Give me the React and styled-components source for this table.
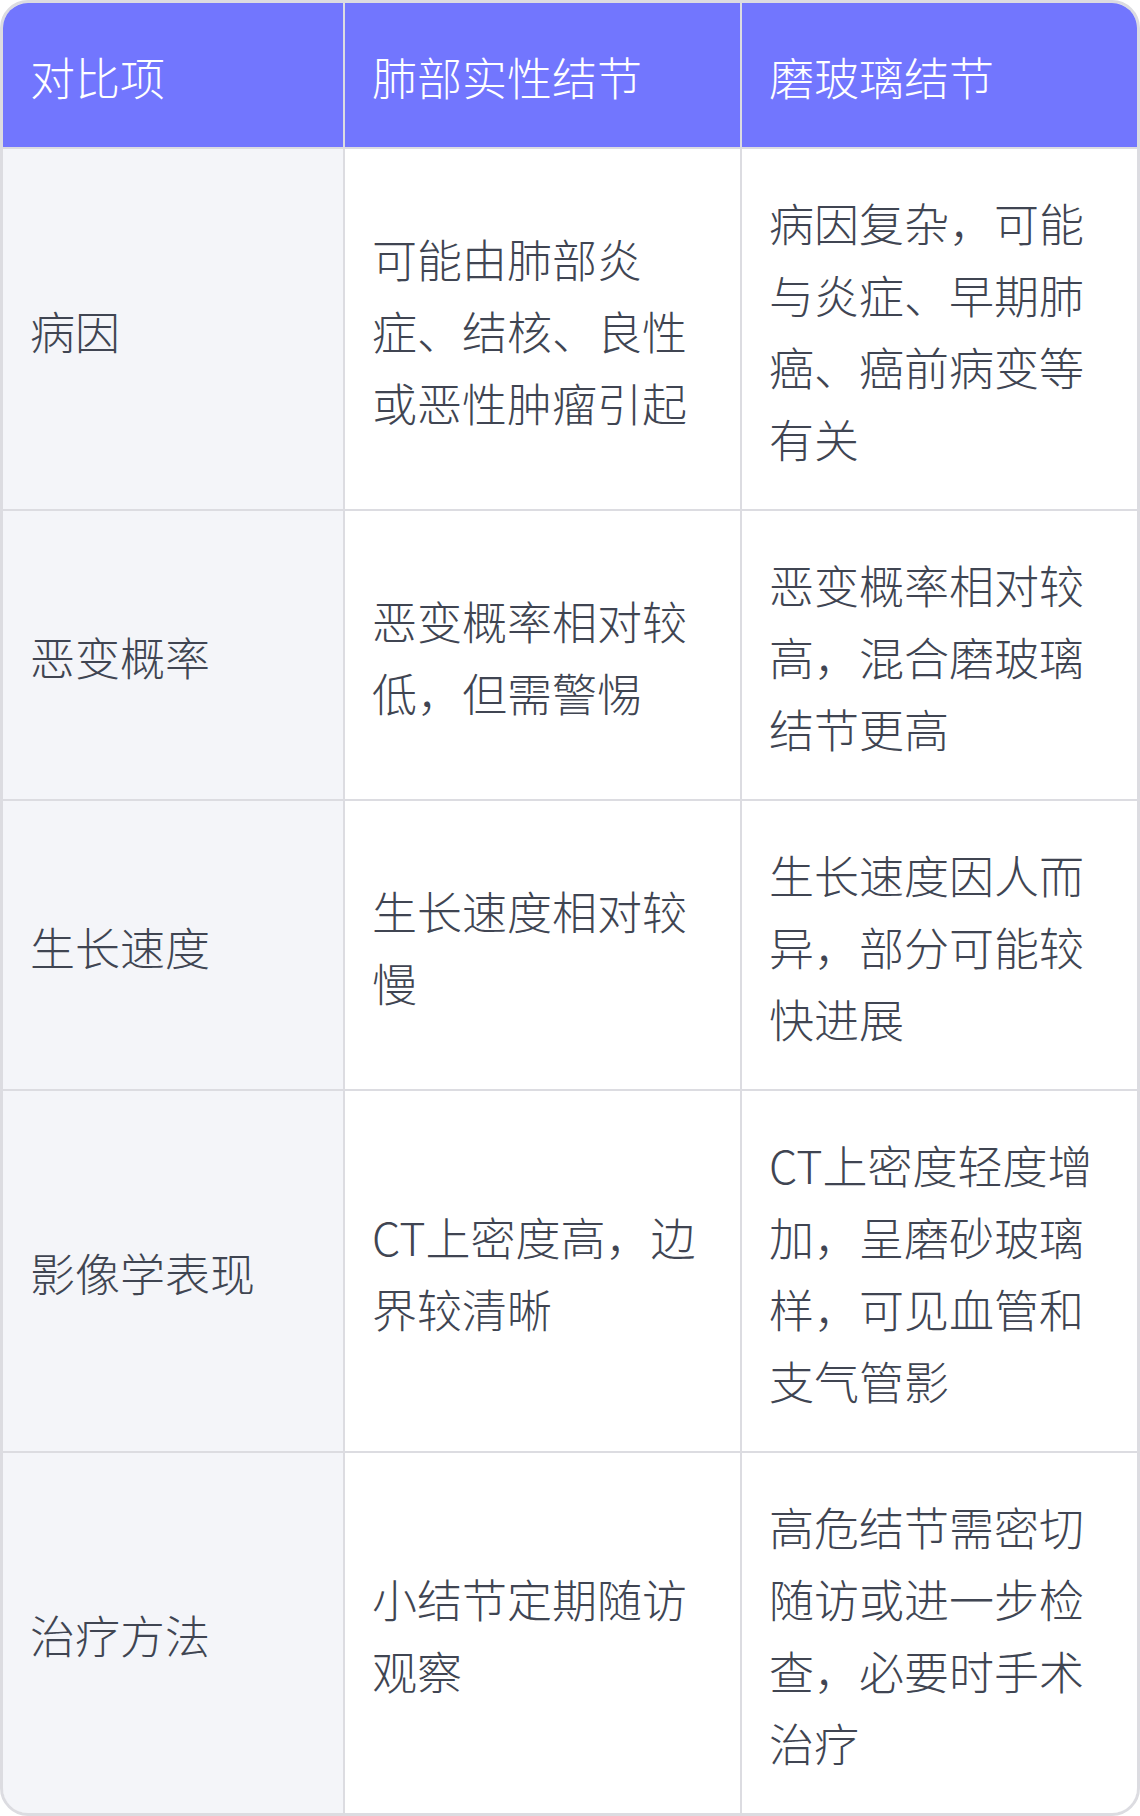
import React from "react";
import styled, { createGlobalStyle } from "styled-components";

const GlobalStyle = createGlobalStyle`
  html, body {
    margin: 0;
    padding: 0;
    background: #fff;
  }
  body {
    font-family: "Noto Sans CJK SC Light", "Noto Sans CJK SC DemiLight", "Noto Sans CJK SC", "Noto Sans", sans-serif;
  }
`;

const columns = ["对比项", "肺部实性结节", "磨玻璃结节"];

const rows = [
  [
    "病因",
    "可能由肺部炎症、结核、良性或恶性肿瘤引起",
    "病因复杂，可能与炎症、早期肺癌、癌前病变等有关",
  ],
  [
    "恶变概率",
    "恶变概率相对较低，但需警惕",
    "恶变概率相对较高，混合磨玻璃结节更高",
  ],
  [
    "生长速度",
    "生长速度相对较慢",
    "生长速度因人而异，部分可能较快进展",
  ],
  [
    "影像学表现",
    "CT上密度高，边界较清晰",
    "CT上密度轻度增加，呈磨砂玻璃样，可见血管和支气管影",
  ],
  [
    "治疗方法",
    "小结节定期随访观察",
    "高危结节需密切随访或进一步检查，必要时手术治疗",
  ],
];

const App = () => {
  return (
    <>
      <GlobalStyle />
      <TableWrap>
        <Grid>
          {columns.map((c) => (
            <HeadCell key={c}>{c}</HeadCell>
          ))}
          {rows.map((row) =>
            row.map((cell, i) => (
              <Cell key={row[0] + i} first={i === 0}>
                {cell}
              </Cell>
            ))
          )}
        </Grid>
      </TableWrap>
    </>
  );
};

export default App;

const TableWrap = styled.div`
  width: 1140px;
  box-sizing: border-box;
  border: 3px solid #dcdce1;
  border-radius: 28px;
  overflow: hidden;
  background: #dcdce1;
`;

const Grid = styled.div`
  display: grid;
  grid-template-columns: 340fr 395fr 395fr;
  gap: 2px;
  background: #dcdce1;
`;

const BaseCell = styled.div`
  display: flex;
  align-items: center;
  box-sizing: border-box;
  padding: 38px 27px 34px;
  font-size: 45px;
  line-height: 72px;
  font-weight: 300;
  word-break: break-all;
  line-break: strict;
`;

const HeadCell = styled(BaseCell)`
  background: #7276fe;
  color: #ffffff;
`;

const Cell = styled(BaseCell)`
  background: ${({ first }) => (first ? "#f4f5f9" : "#ffffff")};
  color: #404552;
`;
